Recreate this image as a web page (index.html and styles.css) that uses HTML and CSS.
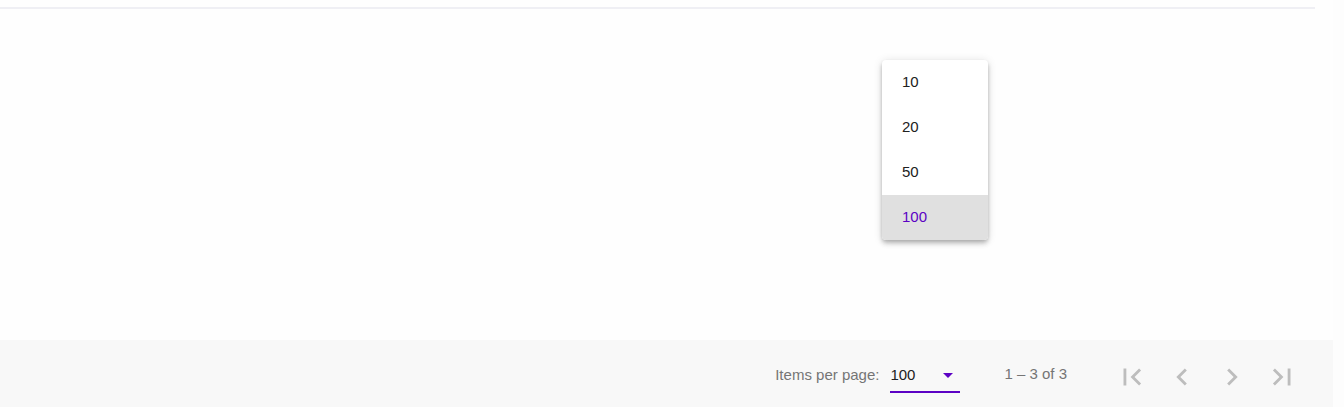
FILE: index.html
```html
<!DOCTYPE html>
<html>
<head>
<meta charset="utf-8">
<link rel="stylesheet" href="styles.css">
</head>
<body>
<div class="page">
  <div class="content">
    <div class="rule"></div>
  </div>
  <div class="paginator">
    <div class="size">
      <span class="label">Items per page:</span>
      <div class="select">
        <span class="value">100</span>
        <span class="arrow"></span>
      </div>
    </div>
    <div class="range">1 – 3 of 3</div>
    <div class="actions">
      <button class="nav" aria-label="First page"><svg viewBox="0 0 24 24"><path d="M18.41 16.59L13.82 12l4.59-4.59L17 6l-6 6 6 6zM6 6h2v12H6z"/></svg></button>
      <button class="nav" aria-label="Previous page"><svg viewBox="0 0 24 24"><path d="M15.41 7.41L14 6l-6 6 6 6 1.41-1.41L10.83 12z"/></svg></button>
      <button class="nav" aria-label="Next page"><svg viewBox="0 0 24 24"><path d="M10 6L8.59 7.41 13.17 12l-4.58 4.59L10 18l6-6z"/></svg></button>
      <button class="nav" aria-label="Last page"><svg viewBox="0 0 24 24"><path d="M5.59 7.41L10.18 12l-4.59 4.59L7 18l6-6-6-6zM16 6h2v12h-2z"/></svg></button>
    </div>
  </div>
  <div class="menu">
    <div class="option">10</div>
    <div class="option">20</div>
    <div class="option">50</div>
    <div class="option selected">100</div>
  </div>
</div>
</body>
</html>
```

FILE: styles.css
```css
html, body {
  margin: 0;
  padding: 0;
  background: #fdfdfd;
}
body {
  font-family: "Liberation Sans", Arial, sans-serif;
  font-size: 15px;
}
.page {
  position: relative;
  width: 1333px;
  height: 407px;
  display: flex;
  flex-direction: column;
  background: #fefefe;
}
.content {
  height: 340px;
  padding-top: 7px;
  box-sizing: border-box;
}
.rule {
  width: 1315px;
  height: 2px;
  background: #efeff4;
}
.paginator {
  height: 67px;
  background: #f8f8f8;
  display: flex;
  align-items: center;
  justify-content: flex-end;
  padding-right: 26px;
  box-sizing: border-box;
}
.size {
  display: flex;
  align-items: center;
  margin-top: 3px;
}
.label {
  color: #757575;
  line-height: 16px;
  margin-right: 11px;
}
.select {
  width: 70px;
  height: 36px;
  box-sizing: border-box;
  padding-top: 10px;
  border-bottom: 2px solid #5c02c4;
  display: flex;
  align-items: flex-start;
  justify-content: space-between;
  color: #212121;
}
.select .value {
  line-height: 16px;
}
.arrow {
  width: 0;
  height: 0;
  border-left: 5.5px solid transparent;
  border-right: 5.5px solid transparent;
  border-top: 5px solid #5c02c4;
  margin-right: 7px;
  margin-top: 6px;
}
.range {
  color: #757575;
  line-height: 16px;
  margin-left: 44px;
  margin-right: 40px;
  margin-top: 1px;
}
.actions {
  display: flex;
  margin-top: 6px;
}
.nav {
  width: 50px;
  height: 40px;
  padding: 0;
  border: 0;
  background: transparent;
  display: flex;
  align-items: center;
  justify-content: center;
}
.nav svg {
  width: 34px;
  height: 34px;
  fill: #bdbdbd;
}
.menu {
  position: absolute;
  left: 882px;
  top: 60px;
  width: 106px;
  background: #fff;
  border-radius: 4px;
  overflow: hidden;
  box-shadow: 0 2px 4px -1px rgba(0,0,0,.2), 0 4px 5px 0 rgba(0,0,0,.14), 0 1px 10px 0 rgba(0,0,0,.12);
}
.option {
  height: 45px;
  line-height: 43px;
  padding-left: 20px;
  color: #212121;
}
.option.selected {
  background: #e0e0e0;
  color: #5c02c4;
}
```
